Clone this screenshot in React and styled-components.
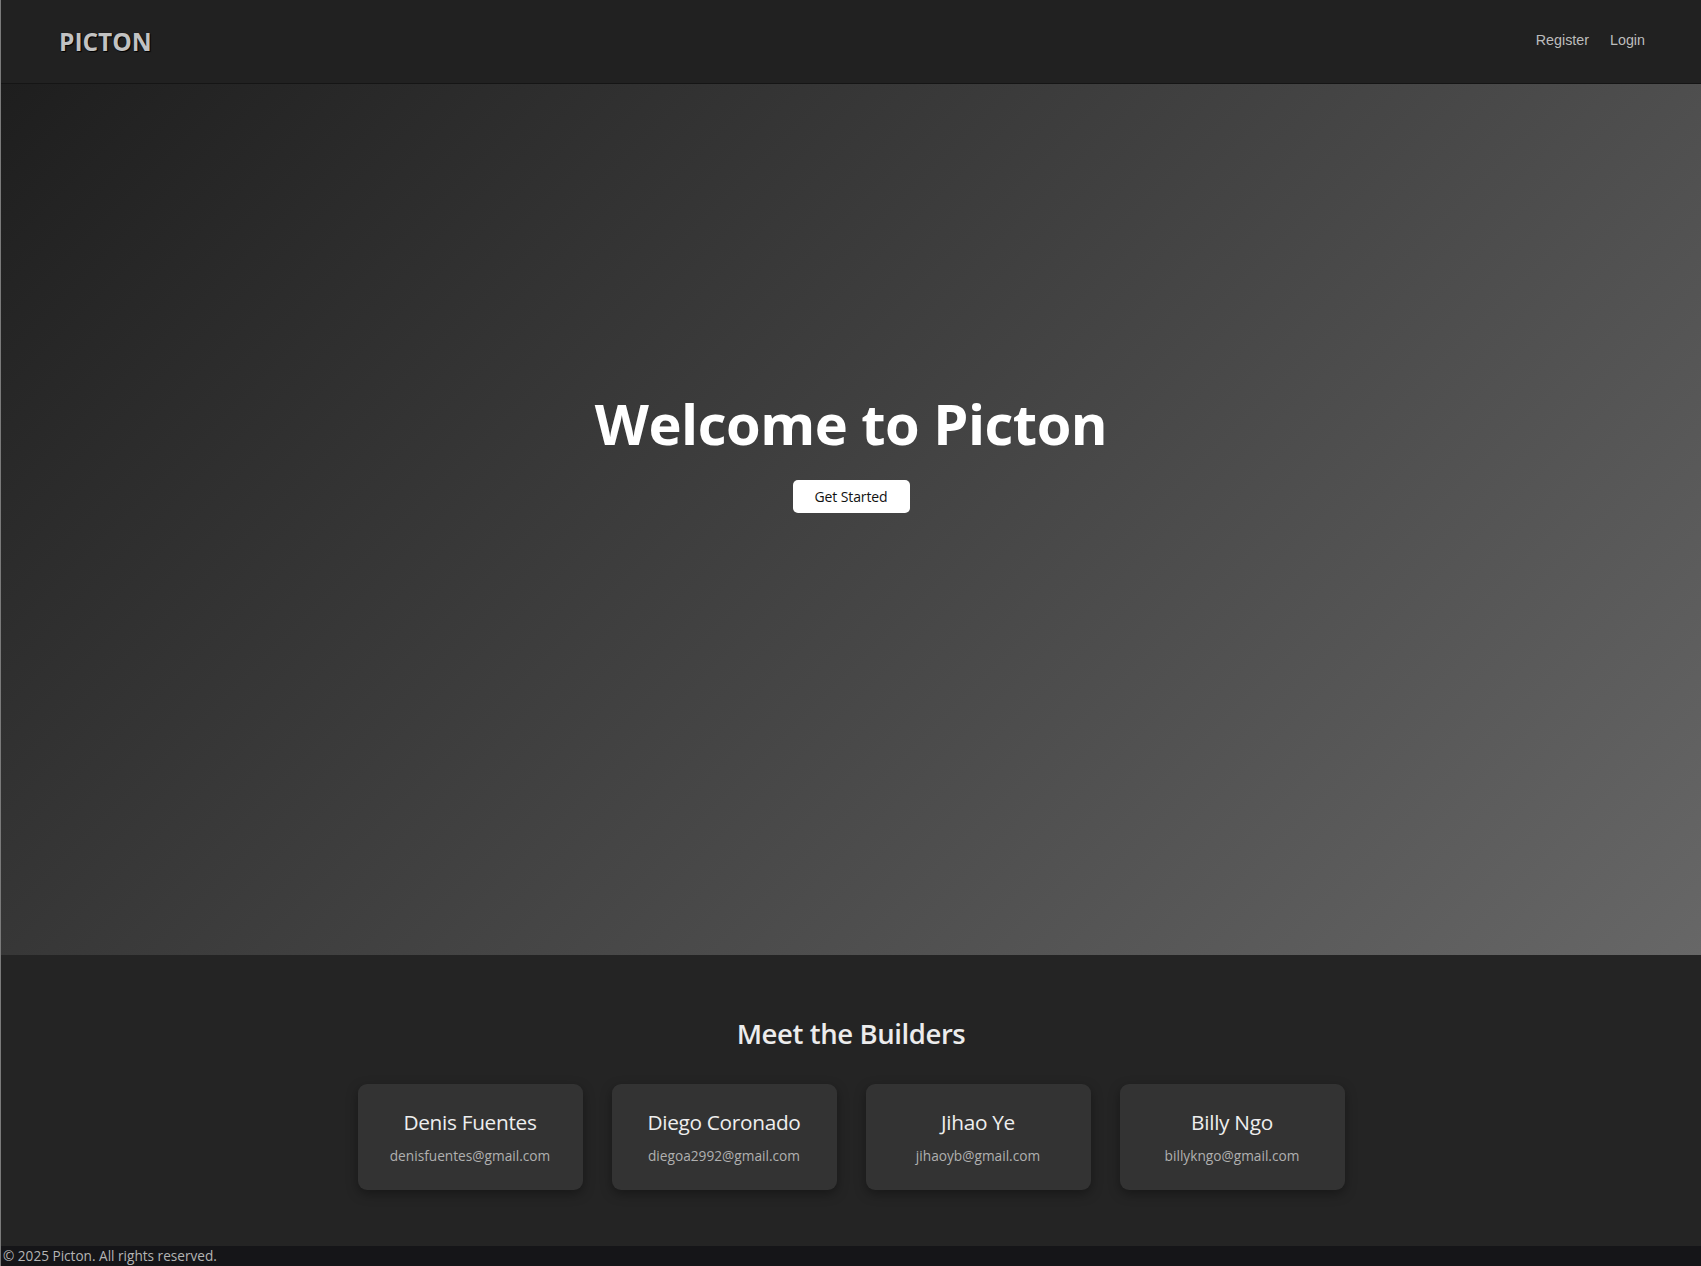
import styled, { createGlobalStyle } from 'styled-components';

const GlobalStyle = createGlobalStyle`
  * { box-sizing: border-box; }
  html, body {
    margin: 0;
    padding: 0;
    background: #232323;
  }
  body {
    font-family: "Open Sans", "Noto Sans", sans-serif;
    border-left: 1px solid #7a7a7a;
  }
`;

const Page = styled.div`
  display: flex;
  flex-direction: column;
  min-height: 100vh;
`;

const Header = styled.header`
  height: 84px;
  display: flex;
  align-items: center;
  justify-content: space-between;
  padding: 0 56px 0 58px;
  background: #212121;
  border-bottom: 1px solid #151515;
`;

const Logo = styled.div`
  font-family: "Open Sans", sans-serif;
  font-size: 24.5px;
  font-weight: 700;
  color: #c2c2c2;
  text-shadow: 0 0 1px #000, 1px 1px 1px #000;
  margin-top: -1px;
`;

const Nav = styled.nav`
  display: flex;
  gap: 21px;
  margin-top: -4px;
`;

const NavLink = styled.a`
  font-family: "Liberation Sans", Arial, sans-serif;
  font-size: 14.3px;
  color: #bdbdbd;
  text-decoration: none;
  cursor: pointer;
`;

const Hero = styled.section`
  height: 871px;
  display: flex;
  flex-direction: column;
  align-items: center;
  justify-content: center;
  padding-bottom: 136px;
  background: linear-gradient(135deg, #1e1e1e 0%, #676767 100%);
`;

const Title = styled.h1`
  margin: 0;
  font-size: 56px;
  font-weight: 700;
  line-height: 1.2;
  color: #fff;
  letter-spacing: -0.5px;
`;

const StartButton = styled.button`
  margin-top: 22px;
  width: 117px;
  height: 33px;
  border: none;
  border-radius: 5px;
  background: #fff;
  color: #111;
  font-family: "Open Sans", sans-serif;
  font-size: 14px;
  letter-spacing: -0.1px;
  cursor: pointer;
`;

const Builders = styled.section`
  flex: 1;
  display: flex;
  flex-direction: column;
  align-items: center;
  padding: 61px 0 46px;
  background: #242424;
`;

const SectionTitle = styled.h2`
  margin: 0 0 32px;
  font-size: 27.5px;
  font-weight: 600;
  line-height: 1.3;
  color: #ececec;
  letter-spacing: -0.4px;
`;

const CardRow = styled.div`
  display: flex;
  gap: 29px;
`;

const Card = styled.div`
  width: 225px;
  height: 106px;
  display: flex;
  flex-direction: column;
  align-items: center;
  padding-top: 24px;
  background: #333333;
  border-radius: 9px;
  box-shadow: 0 4px 12px rgba(0, 0, 0, 0.35);
`;

const Name = styled.h3`
  margin: 0;
  font-size: 20.8px;
  font-weight: 400;
  line-height: 1.4;
  color: #eeeeee;
  letter-spacing: -0.3px;
`;

const Email = styled.p`
  margin: 9px 0 0;
  font-size: 13.7px;
  line-height: 1.4;
  color: #b0b0b0;
`;

const Footer = styled.footer`
  height: 20px;
  padding-left: 2px;
  background: #151518;
  color: #b4b4b4;
  font-size: 13.6px;
  line-height: 20px;
`;

const builders = [
  { name: 'Denis Fuentes', email: 'denisfuentes@gmail.com' },
  { name: 'Diego Coronado', email: 'diegoa2992@gmail.com' },
  { name: 'Jihao Ye', email: 'jihaoyb@gmail.com' },
  { name: 'Billy Ngo', email: 'billykngo@gmail.com' },
];

export default function App() {
  return (
    <Page>
      <GlobalStyle />
      <Header>
        <Logo>PICTON</Logo>
        <Nav>
          <NavLink>Register</NavLink>
          <NavLink>Login</NavLink>
        </Nav>
      </Header>
      <Hero>
        <Title>Welcome to Picton</Title>
        <StartButton>Get Started</StartButton>
      </Hero>
      <Builders>
        <SectionTitle>Meet the Builders</SectionTitle>
        <CardRow>
          {builders.map((b) => (
            <Card key={b.email}>
              <Name>{b.name}</Name>
              <Email>{b.email}</Email>
            </Card>
          ))}
        </CardRow>
      </Builders>
      <Footer>© 2025 Picton. All rights reserved.</Footer>
    </Page>
  );
}
